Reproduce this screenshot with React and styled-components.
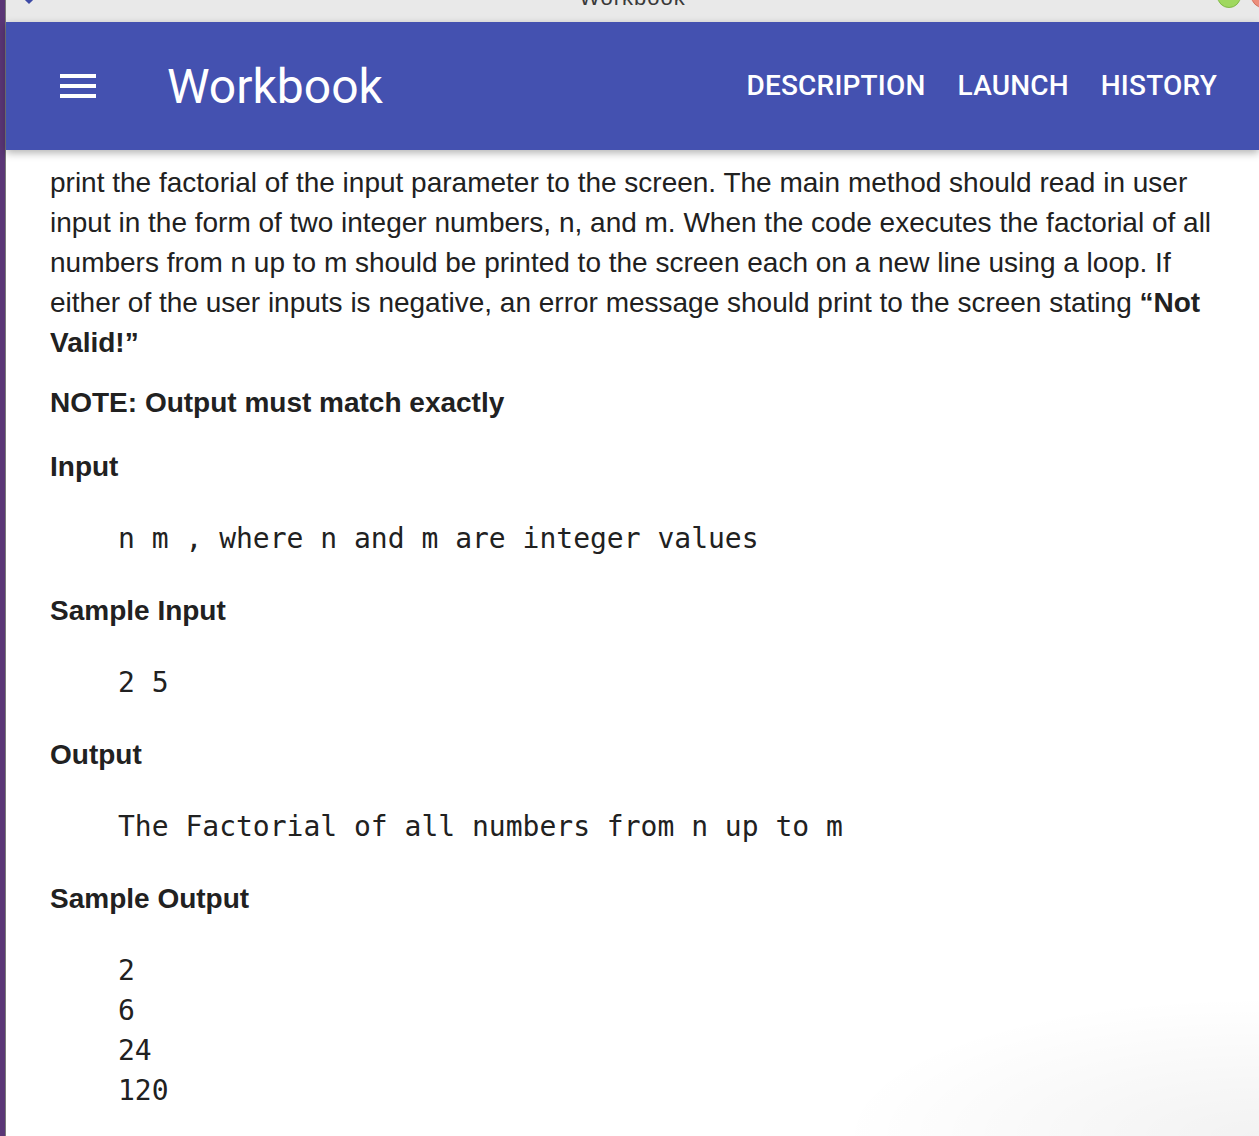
import React from "react";
import styled, { createGlobalStyle } from "styled-components";

const GlobalStyle = createGlobalStyle`
  html, body {
    margin: 0;
    padding: 0;
    background: #ffffff;
  }
  body {
    font-family: "Liberation Sans", Arial, sans-serif;
  }
`;

const sections = [
  { title: "Input", lines: ["n m , where n and m are integer values"] },
  { title: "Sample Input", lines: ["2 5"] },
  { title: "Output", lines: ["The Factorial of all numbers from n up to m"] },
  { title: "Sample Output", lines: ["2", "6", "24", "120"] },
];

const App = () => {
  return (
    <>
      <GlobalStyle />
      <Window>
        <Edge />
        <Main>
          <TitleBar>
            <AppGlyph />
            <WindowTitle>Workbook</WindowTitle>
            <Lights>
              <Light color="#9fd85f" border="#82b94a" />
              <Light color="#ec8e7c" border="#d3715f" />
            </Lights>
          </TitleBar>
          <Header>
            <MenuButton aria-label="menu">
              <span />
              <span />
              <span />
            </MenuButton>
            <Brand>Workbook</Brand>
            <Nav>
              <NavLink>DESCRIPTION</NavLink>
              <NavLink>LAUNCH</NavLink>
              <NavLink>HISTORY</NavLink>
            </Nav>
          </Header>
          <Content>
            <Paragraph>
              print the factorial of the input parameter to the screen. The
              main method should read in user input in the form of two integer
              numbers, n, and m. When the code executes the factorial of all
              numbers from n up to m should be printed to the screen each on a
              new line using a loop. If either of the user inputs is negative,
              an error message should print to the screen stating{" "}
              <strong>“Not Valid!”</strong>
            </Paragraph>
            <Note>NOTE: Output must match exactly</Note>
            {sections.map((s) => (
              <Section key={s.title}>
                <Heading>{s.title}</Heading>
                <Code>{s.lines.join("\n")}</Code>
              </Section>
            ))}
          </Content>
        </Main>
      </Window>
    </>
  );
};

const Window = styled.div`
  display: flex;
  width: 1259px;
  height: 1136px;
  overflow: hidden;
  background: radial-gradient(
    ellipse 420px 140px at 1259px 1136px,
    rgba(0, 0, 0, 0.05),
    rgba(0, 0, 0, 0) 100%
  );
`;

const Edge = styled.div`
  flex: 0 0 5px;
  background: #5a3676;
  border-right: 1px solid #7a7a7a;
`;

const Main = styled.div`
  flex: 1;
  display: flex;
  flex-direction: column;
  min-width: 0;
`;

const TitleBar = styled.div`
  position: relative;
  flex: 0 0 22px;
  height: 22px;
  background: #e9e9e9;
  display: flex;
  justify-content: center;
  overflow: hidden;
`;

const AppGlyph = styled.div`
  position: absolute;
  left: 18px;
  top: -8px;
  width: 10px;
  height: 10px;
  background: #3d4aa6;
  transform: rotate(45deg);
`;

const WindowTitle = styled.div`
  margin-top: -15px;
  font-family: "Liberation Sans", Arial, sans-serif;
  font-size: 22px;
  color: #3a3a3a;
  letter-spacing: 1px;
`;

const Lights = styled.div`
  position: absolute;
  right: -16px;
  top: -16px;
  display: flex;
  gap: 10px;
`;

const Light = styled.div`
  width: 22px;
  height: 22px;
  border-radius: 50%;
  background: ${(p) => p.color};
  border: 1px solid ${(p) => p.border};
`;

const Header = styled.header`
  position: relative;
  z-index: 2;
  flex: 0 0 128px;
  height: 128px;
  display: flex;
  align-items: center;
  padding: 0 42px 0 54px;
  background: #4451b0;
  box-shadow: 0 3px 8px rgba(0, 0, 0, 0.3);
  font-family: Roboto, "Liberation Sans", sans-serif;
  color: #ffffff;
`;

const MenuButton = styled.div`
  width: 36px;
  display: flex;
  flex-direction: column;
  gap: 6px;
  span {
    display: block;
    height: 4px;
    background: #ffffff;
  }
`;

const Brand = styled.h1`
  margin: 0 0 0 71px;
  font-size: 48px;
  font-weight: 400;
`;

const Nav = styled.nav`
  margin-left: auto;
  display: flex;
  gap: 32px;
  margin-top: -2px;
`;

const NavLink = styled.span`
  font-size: 28px;
  font-weight: 500;
  letter-spacing: 0.2px;
`;

const Content = styled.main`
  padding: 13px 30px 0 44px;
  color: #212121;
  font-family: "Liberation Sans", Arial, sans-serif;
  font-size: 28px;
  line-height: 40px;
`;

const Paragraph = styled.p`
  margin: 0 0 20px;
`;

const Note = styled.p`
  margin: 0 0 24px;
  font-weight: 700;
`;

const Section = styled.section`
  display: flex;
  flex-direction: column;
  gap: 32px;
  margin-bottom: 32px;
`;

const Heading = styled.h4`
  margin: 0;
  font-size: 28px;
  line-height: 40px;
  font-weight: 700;
`;

const Code = styled.pre`
  margin: 0 0 0 68px;
  font-family: "DejaVu Sans Mono", "Liberation Mono", monospace;
  font-size: 28px;
  line-height: 40px;
  color: #212121;
`;

export default App;
